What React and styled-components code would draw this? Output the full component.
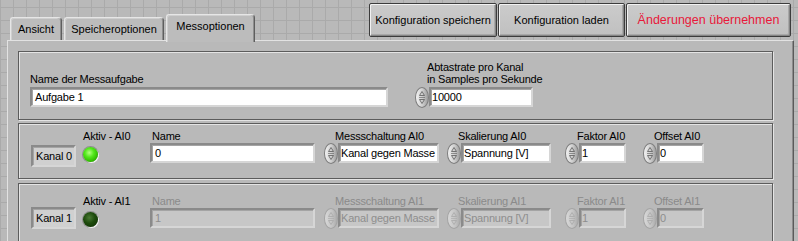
import React from "react";
import styled, { createGlobalStyle } from "styled-components";

const Global = createGlobalStyle`
  html, body { margin: 0; padding: 0; }
  body {
    width: 798px;
    height: 241px;
    overflow: hidden;
    font-family: "Liberation Sans", Arial, sans-serif;
    font-size: 11px;
    color: #000;
    background-color: #b9b9b9;
    background-image:
      linear-gradient(#aaaaaa 1px, transparent 1px),
      linear-gradient(90deg, #aaaaaa 1px, transparent 1px);
    background-size: 13px 13px;
    background-position: 0 7px, 0 0;
  }
`;

const Page = styled.div`
  width: 798px;
  height: 241px;
  display: flex;
  flex-direction: column;
`;

const Header = styled.div`
  height: 40px;
  display: flex;
  align-items: flex-end;
  padding-left: 10px;
  box-sizing: border-box;
`;

const Tabs = styled.div`
  display: flex;
  align-items: flex-end;
  gap: 2px;
`;

const Tab = styled.div`
  position: relative;
  z-index: ${(p) => (p.$active ? 2 : 0)};
  box-sizing: border-box;
  width: ${(p) => p.$w}px;
  height: ${(p) => (p.$active ? 28 : 23)}px;
  margin-bottom: ${(p) => (p.$active ? -2 : 0)}px;
  padding-top: 4px;
  text-align: center;
  background: #bcbcbc;
  border-top: 1px solid #e6e6e6;
  border-left: 1px solid #e6e6e6;
  border-right: 1px solid #5e5e5e;
  border-radius: 3px 4px 0 0;
  box-shadow: inset -1px 0 0 #8e8e8e, inset 1px 1px 0 #cfcfcf;
  line-height: 14px;
  white-space: nowrap;
`;

const Buttons = styled.div`
  align-self: flex-start;
  margin-top: 3px;
  margin-left: auto;
  margin-right: 7px;
  display: flex;
  gap: 1px;
`;

const Button = styled.div`
  box-sizing: border-box;
  width: ${(p) => p.$w}px;
  height: 34px;
  display: flex;
  align-items: center;
  justify-content: center;
  border: 1px solid #3c3c3c;
  border-radius: 2px;
  background: linear-gradient(#cbcbcb, #c0c0c0);
  box-shadow: inset 1px 1px 0 #f2f2f2, inset -1px -1px 0 #858585, inset -2px -2px 0 #a8a8a8;
  color: ${(p) => p.$color || "#000"};
  font-size: ${(p) => p.$size || 11}px;
  white-space: nowrap;
`;

const Panel = styled.div`
  margin-left: 7px;
  width: 787px;
  flex: 1;
  box-sizing: border-box;
  background: #b9b9b9;
  border-top: 1px solid #e2e2e2;
  border-left: 1px solid #e2e2e2;
  border-right: 1px solid #5a5a5a;
  box-shadow: inset -1px 0 0 #8c8c8c;
  padding: 10px 20px 0 10px;
  overflow: hidden;
`;

const GroupBox = styled.div`
  box-sizing: border-box;
  height: ${(p) => p.$h}px;
  margin-bottom: ${(p) => p.$mb || 0}px;
  border: 1px solid #5c5c5c;
  box-shadow: inset 1px 1px 0 #e4e4e4, 1px 1px 0 #e4e4e4;
  padding-top: ${(p) => p.$pt}px;
  display: flex;
  align-items: ${(p) => p.$align || "flex-start"};
  padding-bottom: ${(p) => p.$pb || 0}px;
`;

const Column = styled.div`
  display: flex;
  flex-direction: column;
  width: ${(p) => p.$w}px;
  margin-left: ${(p) => p.$ml || 0}px;
  flex-shrink: 0;
`;

const Label = styled.div`
  line-height: ${(p) => p.$lh || 13}px;
  height: ${(p) => (p.$lh || 13) * (p.$lines || 1)}px;
  padding-left: ${(p) => p.$pl || 0}px;
  margin-bottom: ${(p) => p.$mb || 0}px;
  color: ${(p) => (p.$disabled ? "#8a8a8a" : "#000")};
  letter-spacing: -0.2px;
  white-space: nowrap;
`;

const ControlRow = styled.div`
  display: flex;
  align-items: center;
  height: 20px;
`;

const Field = styled.div`
  box-sizing: border-box;
  flex: 1;
  height: 20px;
  border-style: solid;
  border-width: 2px;
  border-color: #8a8a8a #d6d6d6 #d6d6d6 #8a8a8a;
  box-shadow: inset 1px 1px 0 #a4a4a4;
  background: ${(p) => (p.$disabled ? "#c7c7c7" : p.$indicator ? "#d0d0d0" : "#fff")};
  color: ${(p) => (p.$disabled ? "#8e8e8e" : "#000")};
  padding-left: ${(p) => (p.$pl === undefined ? 3 : p.$pl)}px;
  line-height: 16px;
  letter-spacing: -0.2px;
  white-space: nowrap;
  overflow: hidden;
`;

const Indicator = styled(Field)`
  flex: none;
  width: 45px;
  height: 22px;
  line-height: 18px;
  margin-top: ${(p) => p.$top}px;
`;

const SpinBox = styled.div`
  box-sizing: border-box;
  width: 14px;
  height: 21px;
  flex-shrink: 0;
  border-radius: 50%;
  border: 1px solid ${(p) => (p.$disabled ? "#a4a4a4" : "#7e7e7e")};
  background: ${(p) =>
    p.$disabled
      ? "linear-gradient(90deg, #d8d8d8, #c4c4c4 60%, #ababab)"
      : "linear-gradient(90deg, #f2f2f2, #cdcdcd 55%, #9c9c9c)"};
  display: flex;
  align-items: center;
  justify-content: center;
`;

const Led = styled.div`
  width: 15px;
  height: 15px;
  margin-top: 4px;
  border-radius: 50%;
  background: ${(p) =>
    p.$on
      ? "radial-gradient(circle at 42% 38%, #b4ff80 0%, #52e81c 35%, #30b800 70%, #1f7a00 100%)"
      : "radial-gradient(circle at 42% 38%, #4a7a34 0%, #1d4a0c 45%, #0e2e04 100%)"};
  box-shadow: 1px 1px 0 #f4f4f4, 0 0 0 1px #8e8e8e;
`;

const Spinner = ({ disabled }) => {
  const c = disabled ? "#a8a8a8" : "#5a5a5a";
  return (
    <SpinBox $disabled={disabled}>
      <svg width="8" height="15" viewBox="0 0 8 15">
        <path d="M4 1.5 L6.5 5.5 L1.5 5.5 Z" fill="none" stroke={c} strokeWidth="0.8" />
        <line x1="1" y1="7.5" x2="7" y2="7.5" stroke={c} strokeWidth="0.6" />
        <path d="M4 13.5 L6.5 9.5 L1.5 9.5 Z" fill="none" stroke={c} strokeWidth="0.8" />
      </svg>
    </SpinBox>
  );
};

const columns = [
  { key: "mess", label: "Messschaltung", ml: 9, w: 115, pl: 11, value: "Kanal gegen Masse" },
  { key: "skal", label: "Skalierung", ml: 8, w: 104, pl: 11, value: "Spannung [V]" },
  { key: "fakt", label: "Faktor", ml: 14, w: 61, pl: 12, value: "1" },
  { key: "off", label: "Offset", ml: 17, w: 61, pl: 11, value: "0" },
];

const ChannelBox = ({ index, active, pt, h, mb, kanalTop }) => {
  const dis = !active;
  return (
    <GroupBox $h={h} $pt={pt} $mb={mb}>
      <Column $w={45} $ml={12}>
        <Indicator $indicator $top={kanalTop}>Kanal {index}</Indicator>
      </Column>
      <Column $w={67} $ml={7}>
        <Label>Aktiv - AI{index}</Label>
        <Led $on={active} />
      </Column>
      <Column $w={165}>
        <Label $pl={2} $disabled={dis}>Name</Label>
        <ControlRow>
          <Field $disabled={dis}>{index}</Field>
        </ControlRow>
      </Column>
      {columns.map((c) => (
        <Column key={c.key} $w={c.w} $ml={c.ml}>
          <Label $pl={c.pl} $disabled={dis}>
            {c.label} AI{index}
          </Label>
          <ControlRow>
            <Spinner disabled={dis} />
            <Field $disabled={dis} $pl={1}>{c.value}</Field>
          </ControlRow>
        </Column>
      ))}
    </GroupBox>
  );
};

export default function App() {
  return (
    <Page>
      <Global />
      <Header>
        <Tabs>
          <Tab $w={52}>Ansicht</Tab>
          <Tab $w={100}>Speicheroptionen</Tab>
          <Tab $w={89} $active>Messoptionen</Tab>
        </Tabs>
        <Buttons>
          <Button $w={128}>Konfiguration speichern</Button>
          <Button $w={127}>Konfiguration laden</Button>
          <Button $w={165} $color="#e8183a" $size={12.5}>Änderungen übernehmen</Button>
        </Buttons>
      </Header>
      <Panel>
        <GroupBox $h={69} $pt={9} $mb={3} $align="flex-end" $pb={12}>
          <Column $w={358} $ml={11}>
            <Label $mb={1}>Name der Messaufgabe</Label>
            <ControlRow>
              <Field>Aufgabe 1</Field>
            </ControlRow>
          </Column>
          <Column $w={118} $ml={27}>
            <Label $pl={12} $lh={12} $lines={2} $mb={2}>
              Abtastrate pro Kanal
              <br />
              in Samples pro Sekunde
            </Label>
            <ControlRow>
              <Spinner />
              <Field $pl={1}>10000</Field>
            </ControlRow>
          </Column>
        </GroupBox>
        <ChannelBox index={0} active h={56} pt={6} mb={4} kanalTop={15} />
        <ChannelBox index={1} active={false} h={70} pt={11} mb={0} kanalTop={12} />
      </Panel>
    </Page>
  );
}
